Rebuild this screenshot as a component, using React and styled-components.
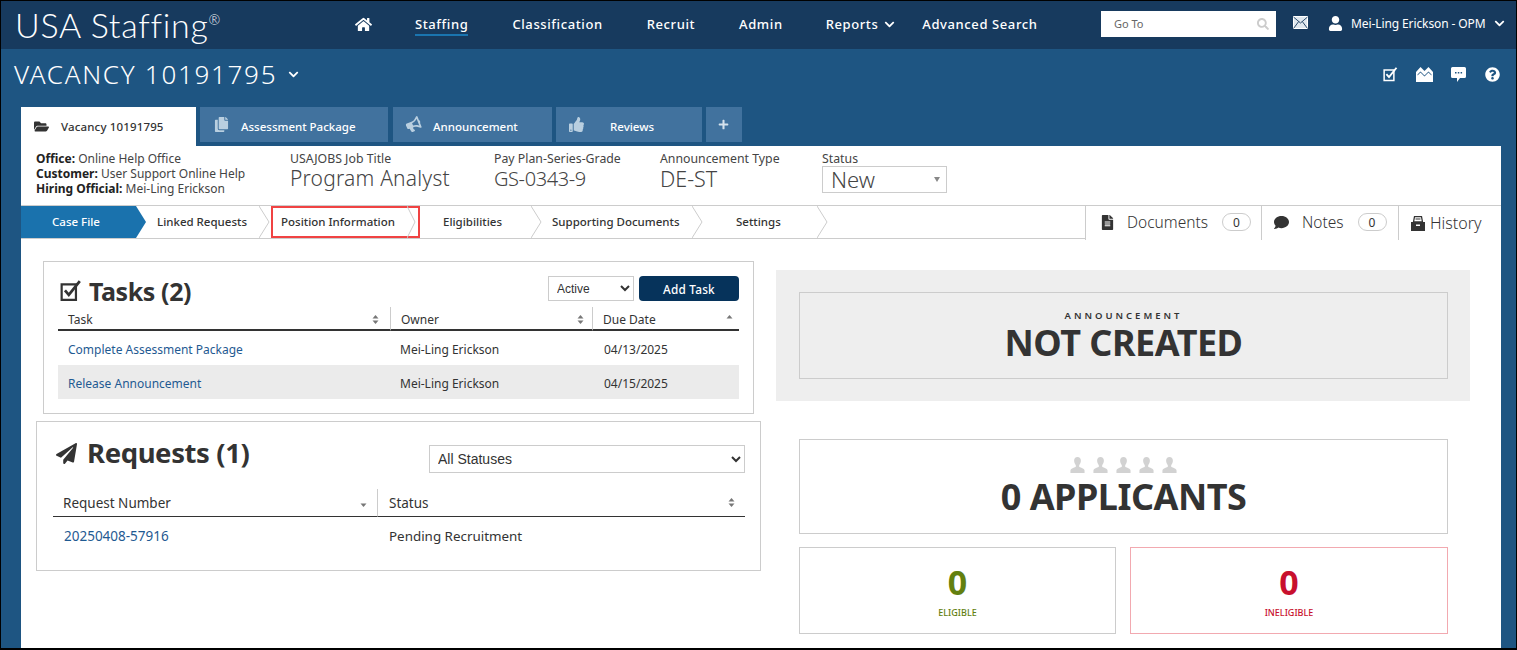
import React from "react";
import styled, { createGlobalStyle } from "styled-components";
import { FaHome, FaCopy, FaBullhorn, FaThumbsUp, FaPlus, FaFolderOpen, FaSearch, FaUser, FaChevronDown, FaFileAlt, FaComment, FaQuestionCircle, FaPaperPlane } from "react-icons/fa";

const UI = `"Noto Sans", "Open Sans", sans-serif`;

const Global = createGlobalStyle`
  html, body { margin: 0; padding: 0; background: #fff; }
  body { font-family: ${UI}; color: #333; overflow: hidden; }
  * { box-sizing: border-box; }
`;

const Frame = styled.div`
  width: 1517px; height: 650px; overflow: hidden;
  border: 1px solid #000; border-width: 1px 1px 2px 1px;
  background: #1e5582; display: flex; flex-direction: column;
`;
const Top = styled.header`
  height: 48px; flex: none; background: #173a5e; display: flex; align-items: center; color: #fff;
`;
const Logo = styled.div`
  width: 354px; padding-left: 14px; font-family: Lato, sans-serif; font-weight: 300; font-size: 34px; letter-spacing: .7px; line-height: 48px; white-space: nowrap;
  sup { font-size: 14px; vertical-align: 13px; line-height: 0; letter-spacing: 0; font-weight: 300; }
`;
const Nav = styled.nav`display: flex; align-items: center; height: 48px; width: 746px;`;
const NavLink = styled.a`
  margin-left: ${p => p.$ml}px; font-size: 13px; font-weight: 500; letter-spacing: .6px; white-space: nowrap; line-height: 20px; color: #fff;
  border-bottom: 2px solid ${p => p.$active ? "#1a75b0" : "transparent"}; display: flex; align-items: center; gap: 6px;
`;
const Search = styled.div`
  width: 175px; height: 26px; margin-top: -3px; background: #fff; color: #666; font-size: 11px; display: flex; align-items: center; justify-content: space-between; padding: 0 7px 0 13px;
  svg { color: #ccc; }
`;
const Mail = styled.span`margin: -5px 0 0 17px; display: flex;`;
const UserMenu = styled.div`margin: -3px 0 0 20px; display: flex; align-items: center; font-size: 12px; gap: 8px; white-space: nowrap; letter-spacing: -.1px;`;
const Sub = styled.div`height: 58px; flex: none; display: flex; align-items: center; justify-content: space-between; padding: 0 16px 8px 13px; color: #fff;`;
const Vacancy = styled.h1`
  margin: 0; font-family: ${UI}; font-weight: 300; font-size: 26px; letter-spacing: 1.7px; display: flex; align-items: center; gap: 11px; white-space: nowrap;
`;
const Tools = styled.div`display: flex; align-items: center; gap: 18px;`;
const Help = styled(FaQuestionCircle)`margin-left: 1px;`;
const Tabs = styled.div`height: 39px; flex: none; display: flex; align-items: flex-start; margin-left: 20px; gap: 4px;`;
const Tab = styled.div`
  width: ${p => p.$w}px; height: ${p => p.$active ? 39 : 35}px; background: ${p => p.$active ? "#fff" : "#41729e"}; color: ${p => p.$active ? "#333" : "#fff"};
  font-size: 11.5px; font-weight: 500; display: flex; align-items: center; padding-left: ${p => p.$pad}px; white-space: nowrap; margin-right: ${p => p.$mr || 0}px;
  letter-spacing: ${p => p.$active ? ".15px" : "0"};
  svg { flex: none; color: ${p => p.$active ? "#333" : p.$bright ? "#d5e2ec" : "#b9cfe0"}; }
  span { margin-left: ${p => p.$gap}px; padding-top: ${p => p.$active ? 0 : 4}px; }
`;
const Horn = styled(FaBullhorn)`transform: rotate(-22deg);`;
const Panel = styled.main`flex: 1; margin: 0 15px 0 20px; background: #fff; display: flex; flex-direction: column; min-height: 0;`;
const Info = styled.section`height: 59px; flex: none; display: flex; padding-top: 5px; color: #444;`;
const Org = styled.div`
  width: 269px; padding-left: 15px; font-size: 12px; line-height: 15px; white-space: nowrap; letter-spacing: 0;
  b { color: #222; font-weight: 700; }
`;
const Field = styled.div`width: ${p => p.$w}px; flex: none; font-size: 12.3px; line-height: 15px; white-space: nowrap; letter-spacing: 0;`;
const Big = styled.div`font-size: ${p => p.$s}px; line-height: 25px; font-weight: 300; letter-spacing: ${p => p.$ls}px;`;
const StatusBox = styled.div`
  width: 125px; height: 27px; border: 1px solid #ccc; font-size: 22px; font-weight: 300; line-height: 25px; padding: 0 6px 0 8px; display: flex; justify-content: space-between; align-items: center;
  i { width: 0; height: 0; border: 3px solid transparent; border-top: 5px solid #888; border-bottom: 0; }
`;
const Steps = styled.div`height: 34px; flex: none; border-top: 1px solid #ccc; border-bottom: 1px solid #ccc; display: flex;`;
const Step = styled.div`
  position: relative; width: ${p => p.$w}px; flex: none; font-size: 11.5px; font-weight: 500; display: flex; align-items: center; padding: 0 0 2px ${p => p.$pad}px; white-space: nowrap;
  color: ${p => p.$on ? "#fff" : "#333"}; background: ${p => p.$on ? "#1a72ad" : "transparent"};
  margin-right: ${p => p.$on ? 10 : 0}px;
  outline: ${p => p.$mark ? "2px solid #f04343" : "none"}; outline-offset: -2px;
`;
const Chev = styled.svg`position: absolute; left: 100%; top: 0; margin-left: ${p => p.$ml}px; width: ${p => p.$w || 11}px; height: 32px;`;
const Spacer = styled.div`flex: 1;`;
const Side = styled.div`
  width: ${p => p.$w}px; flex: none; border-left: 1px solid #ccc; display: flex; align-items: center; padding: ${p => p.$pt || 0}px 0 2px ${p => p.$pad}px; font-size: ${p => p.$fs}px; color: #333; font-weight: 300; white-space: nowrap; height: 34px; margin-bottom: -1px; background: #fff;
  svg { flex: none; margin-right: ${p => p.$gap}px; }
`;
const Count = styled.span`
  width: 29px; height: 18px; border: 1px solid #ccc; border-radius: 9px; font-size: 12px; display: flex; align-items: center; justify-content: center; margin-left: 14px; font-weight: 400;
`;
const Body = styled.div`flex: 1; display: flex; min-height: 0;`;
const Left = styled.div`width: 755px; flex: none; padding: 22px 0 0 15px;`;
const Right = styled.div`flex: 1; padding: 31px 0 0 0;`;
const TaskCard = styled.section`margin-left: 7px; width: 711px; height: 153px; border: 1px solid #ccc; padding: 14px 14px 0 14px;`;
const ReqCard = styled.section`margin-top: 7px; width: 725px; height: 150px; border: 1px solid #ccc; padding: 14px 15px 0 16px;`;
const CardHead = styled.div`display: flex; align-items: flex-start; height: ${p => p.$h}px; justify-content: space-between;`;
const Title = styled.h2`
  margin: ${p => p.$mt}px 0 0 ${p => p.$ml}px; font-family: ${UI}; font-weight: 700; color: #333; font-size: ${p => p.$s}px; line-height: 34px; display: flex; align-items: center; gap: ${p => p.$gap}px; white-space: nowrap; letter-spacing: -.4px;
  svg { flex: none; }
`;
const Controls = styled.div`display: flex; gap: 5px;`;
const Select = styled.select`
  width: ${p => p.$w}px; height: ${p => p.$h}px; margin-top: ${p => p.$mt || 0}px; border: 1px solid #ccc; background: #fff; font-family: "Liberation Sans", Arial, sans-serif; font-size: ${p => p.$fs}px; color: #333; padding-left: 4px; border-radius: 0;
`;
const AddBtn = styled.button`
  width: 100px; height: 25px; border: 0; border-radius: 4px; background: #06335b; color: #fff; font-family: ${UI}; font-size: 11.8px; font-weight: 500; letter-spacing: .2px; padding: 0;
`;
const Table = styled.div`display: grid; grid-template-columns: ${p => p.$cols}; margin-top: ${p => p.$mt || 0}px;`;
const Th = styled.div`
  height: ${p => p.$h}px; border-bottom: ${p => p.$bw}px solid #333; border-left: ${p => p.$first ? 0 : 1}px solid #ccc; padding: ${p => p.$pt || 0}px ${p => p.$pr}px 0 ${p => p.$pl}px; display: flex; align-items: center; justify-content: space-between; font-size: ${p => p.$fs}px; color: #333; white-space: nowrap;
`;
const Sort = styled.svg`width: 7px; height: 11px; flex: none;`;
const Td = styled.div`
  height: ${p => p.$h}px; padding: ${p => p.$pt || 0}px 0 0 ${p => p.$pl}px; display: flex; align-items: center; font-size: ${p => p.$fs}px; white-space: nowrap; color: ${p => p.$link ? "#1f5a92" : "#333"}; background: ${p => p.$alt ? "#ebebeb" : "transparent"};
`;
const GrayBand = styled.section`width: 694px; height: 131px; background: #eee; padding: 22px 22px 0 23px;`;
const StatBox = styled.div`
  width: ${p => p.$w || 649}px; height: ${p => p.$h}px; border: 1px solid ${p => p.$c || "#ccc"}; display: flex; flex-direction: column; align-items: center; text-align: center;
`;
const Eyebrow = styled.div`margin-top: 16px; font-size: 9.5px; line-height: 13px; font-weight: 600; letter-spacing: 3px; color: #333;`;
const Huge = styled.div`margin-top: ${p => p.$mt || 0}px; font-size: 36px; line-height: 38px; font-weight: 700; color: #333; letter-spacing: -.5px; white-space: nowrap;`;
const Lower = styled.div`margin: 38px 0 0 23px; display: flex; flex-direction: column;`;
const People = styled.div`display: flex; gap: 6px; margin-top: 17px; color: #d2d2d2; height: 16px;`;
const Pair = styled.div`display: flex; gap: 14px; margin-top: 13px;`;
const Num = styled.div`margin-top: 14px; font-size: 34px; line-height: 40px; font-weight: 700; color: ${p => p.$c};`;
const Cap = styled.div`margin-top: 5px; font-size: 9px; line-height: 12px; font-weight: 500; color: ${p => p.$c};`;

const SortIcon = ({ mode = "both" }) => (
  <Sort viewBox="0 0 7 11">
    {mode !== "down" && <path d="M3.500 1L6.500 4.500H.5z" fill="#777" />}
    {mode !== "up" && <path d="M3.500 10L.5 6.500h6z" fill="#777" />}
  </Sort>
);
const Chevron = ({ ml = -12, w = 11 }) => (
  <Chev $ml={ml} $w={w} viewBox={`0 0 ${w} 32`}><path d={`M0 0L${w - 1} 16L0 32`} fill="none" stroke="#ccc" /></Chev>
);
const Person = () => (
  <svg width="17" height="16" viewBox="0 0 17 17" fill="currentColor"><path d="M8.500 0c2.300 0 3.600 1.700 3.600 4 0 2-1 3.700-1.800 4.700v1.600c0 .6 5.700 1.500 5.700 4V17H1v-2.700c0-2.500 5.700-3.400 5.700-4V8.700C5.900 7.700 4.900 6 4.900 4c0-2.300 1.300-4 3.600-4z" /></svg>
);
const Checked = ({ s = 20, c = "#333" }) => (
  <svg width={s} height={s} viewBox="0 0 20 20"><path d="M1.500 4h13v14h-13z" fill="none" stroke={c} strokeWidth="2" /><path d="M4.500 9.500l3.500 4L18 1" fill="none" stroke={c} strokeWidth="2.500" /></svg>
);
const Envelope = () => (
  <svg width="15" height="13" viewBox="0 0 15 13"><rect x=".5" y=".5" width="14" height="12" fill="#dfe7ee" stroke="#fff" /><path d="M.5 1l7 6 7-6M.5 12.500l5.200-7M14.500 12.500l-5.200-7" fill="none" stroke="#173a5e" strokeWidth=".9" /></svg>
);
const Bars = () => (
  <svg width="17" height="15" viewBox="0 0 17 15" fill="#fff"><path d="M0 5l4.500-5 4 4 4-4L17 5v10H0zM1.500 7.500v1L4.500 5.500l4 4 4-4 3 3v-1l-3-3-4 4-4-4z" /></svg>
);
const Bubble = () => (
  <svg width="15" height="15" viewBox="0 0 15 15"><path d="M1.500 0h12A1.500 1.500 0 0 1 15 1.500v8a1.500 1.500 0 0 1-1.500 1.500H9l-3 4v-4H1.500A1.500 1.500 0 0 1 0 9.500v-8A1.500 1.500 0 0 1 1.500 0z" fill="#fff" /><path d="M4 5h1.500v1.500H4zM6.800 5h1.500v1.500H6.800zM9.600 5h1.500v1.500H9.600z" fill="#1e5582" /></svg>
);
const Lockbox = () => (
  <svg width="14" height="15" viewBox="0 0 14 15"><path d="M3.500.7h7l1 5.300h-9z" fill="none" stroke="#333" strokeWidth="1.300" /><path d="M4.500 3h5" stroke="#333" /><path d="M0 6h14v9H0z" fill="#333" /><path d="M5 8.500h4v1.500H5z" fill="#fff" /></svg>
);

export default function App() {
  return (
    <Frame>
      <Global />
      <Top>
        <Logo>USA Staffing<sup>®</sup></Logo>
        <Nav>
          <NavLink $ml={0}><FaHome size={17} /></NavLink>
          <NavLink $ml={43} $active>Staffing</NavLink>
          <NavLink $ml={44}>Classification</NavLink>
          <NavLink $ml={44}>Recruit</NavLink>
          <NavLink $ml={44}>Admin</NavLink>
          <NavLink $ml={43}>Reports <FaChevronDown size={11} /></NavLink>
          <NavLink $ml={27}>Advanced Search</NavLink>
        </Nav>
        <Search>Go To <FaSearch size={12} /></Search>
        <Mail><Envelope /></Mail>
        <UserMenu><FaUser size={15} /> Mei-Ling Erickson - OPM <FaChevronDown size={11} /></UserMenu>
      </Top>
      <Sub>
        <Vacancy>VACANCY 10191795 <FaChevronDown size={11} /></Vacancy>
        <Tools>
          <Checked s={15} c="#fff" />
          <Bars />
          <Bubble />
          <Help size={15} />
        </Tools>
      </Sub>
      <Tabs>
        <Tab $active $w={175} $pad={13} $gap={12}><FaFolderOpen size={15} /><span>Vacancy 10191795</span></Tab>
        <Tab $w={188} $pad={14} $gap={12} $mr={1}><FaCopy size={15} /><span>Assessment Package</span></Tab>
        <Tab $w={159} $pad={13} $gap={12}><Horn size={15} /><span>Announcement</span></Tab>
        <Tab $w={146} $pad={13} $gap={26}><FaThumbsUp size={15} /><span>Reviews</span></Tab>
        <Tab $w={36} $pad={12} $gap={0} $bright><FaPlus size={11} /></Tab>
      </Tabs>
      <Panel>
        <Info>
          <Org>
            <div><b>Office:</b> Online Help Office</div>
            <div><b>Customer:</b> User Support Online Help</div>
            <div><b>Hiring Official:</b> Mei-Ling Erickson</div>
          </Org>
          <Field $w={204}>USAJOBS Job Title<Big $s={21} $ls={.2}>Program Analyst</Big></Field>
          <Field $w={166}>Pay Plan-Series-Grade<Big $s={20} $ls={-.4}>GS-0343-9</Big></Field>
          <Field $w={162}>Announcement Type<Big $s={21.500} $ls={0}>DE-ST</Big></Field>
          <Field $w={125}>Status<StatusBox>New<i /></StatusBox></Field>
        </Info>
        <Steps>
          <Step $on $w={115} $pad={31}>Case File<Chev $ml={0} viewBox="0 0 11 32"><path d="M0 0L10 16L0 32z" fill="#1a72ad" /></Chev></Step>
          <Step $w={125} $pad={11}>Linked Requests<Chevron /></Step>
          <Step $w={149} $pad={10} $mark>Position Information<Chevron ml={-13} w={9} /></Step>
          <Step $w={123} $pad={23}>Eligibilities<Chevron /></Step>
          <Step $w={161} $pad={9}>Supporting Documents<Chevron /></Step>
          <Step $w={125} $pad={32}>Settings<Chevron /></Step>
          <Spacer />
          <Side $w={176} $pad={14} $gap={12} $fs={15.500}><FaFileAlt size={15} />Documents<Count>0</Count></Side>
          <Side $w={137} $pad={12} $gap={13} $fs={15.500}><FaComment size={15} />Notes<Count>0</Count></Side>
          <Side $w={103} $pad={12} $gap={5} $fs={16} $pt={2}><Lockbox />History</Side>
        </Steps>
        <Body>
          <Left>
            <TaskCard>
              <CardHead $h={31}>
                <Title $s={25} $gap={7} $mt={-2} $ml={2}><Checked s={22} />Tasks (2)</Title>
                <Controls>
                  <Select $w={86} $h={25} $fs={12} defaultValue="Active"><option>Active</option></Select>
                  <AddBtn>Add Task</AddBtn>
                </Controls>
              </CardHead>
              <Table $cols="332px 202px 147px">
                <Th $first $h={24} $bw={2} $pl={10} $pr={11} $fs={12} $pt={2}>Task<SortIcon /></Th>
                <Th $h={24} $bw={2} $pl={10} $pr={8} $fs={12} $pt={2}>Owner<SortIcon /></Th>
                <Th $h={24} $bw={2} $pl={10} $pr={6} $fs={12} $pt={2}>Due Date<SortIcon mode="up" /></Th>
                <Td $h={34} $pl={10} $fs={12} $pt={2} $link>Complete Assessment Package</Td>
                <Td $h={34} $pl={10} $fs={12} $pt={2}>Mei-Ling Erickson</Td>
                <Td $h={34} $pl={12} $fs={12} $pt={2}>04/13/2025</Td>
                <Td $h={34} $pl={10} $fs={12} $pt={2} $link $alt>Release Announcement</Td>
                <Td $h={34} $pl={10} $fs={12} $pt={2} $alt>Mei-Ling Erickson</Td>
                <Td $h={34} $pl={12} $fs={12} $pt={2} $alt>04/15/2025</Td>
              </Table>
            </TaskCard>
            <ReqCard>
              <CardHead $h={38}>
                <Title $s={27.500} $gap={10} $mt={0} $ml={3}><FaPaperPlane size={21} />Requests (1)</Title>
                <Select $w={316} $h={28} $fs={14} $mt={9} defaultValue="All Statuses"><option>All Statuses</option></Select>
              </CardHead>
              <Table $mt={15} $cols="324px 368px">
                <Th $first $h={28} $bw={1} $pl={10} $pr={10} $fs={13.500}>Request Number<SortIcon mode="down" /></Th>
                <Th $h={28} $bw={1} $pl={11} $pr={10} $fs={13.500}>Status<SortIcon /></Th>
                <Td $h={38} $pl={11} $fs={13.500} $link>20250408-57916</Td>
                <Td $h={38} $pl={12} $fs={13.400}>Pending Recruitment</Td>
              </Table>
            </ReqCard>
          </Left>
          <Right>
            <GrayBand>
              <StatBox $h={87}>
                <Eyebrow>ANNOUNCEMENT</Eyebrow>
                <Huge $mt={2}>NOT CREATED</Huge>
              </StatBox>
            </GrayBand>
            <Lower>
              <StatBox $h={95}>
                <People><Person /><Person /><Person /><Person /><Person /></People>
                <Huge $mt={5}>0 APPLICANTS</Huge>
              </StatBox>
              <Pair>
                <StatBox $w={317} $h={87}><Num $c="#63800f">0</Num><Cap $c="#63800f">ELIGIBLE</Cap></StatBox>
                <StatBox $w={318} $h={87} $c="#f2a9b0"><Num $c="#c8102e">0</Num><Cap $c="#c8102e">INELIGIBLE</Cap></StatBox>
              </Pair>
            </Lower>
          </Right>
        </Body>
      </Panel>
    </Frame>
  );
}
